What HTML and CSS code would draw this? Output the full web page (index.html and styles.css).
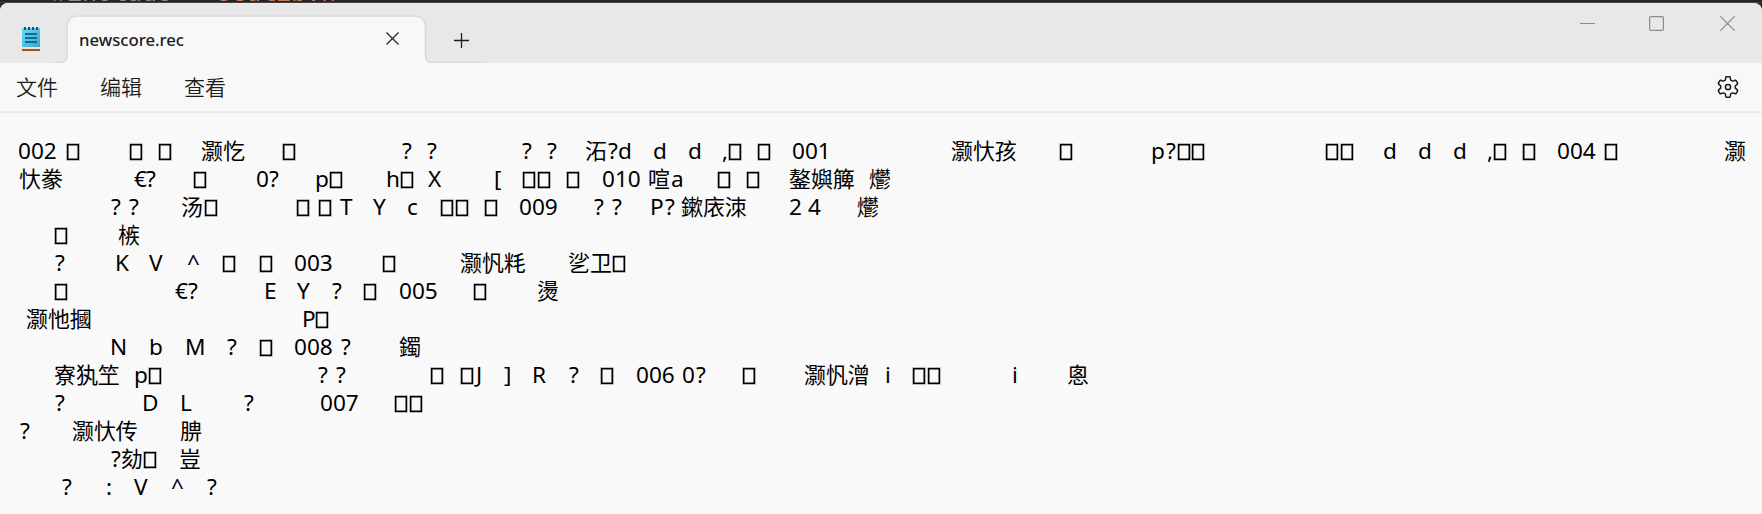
FILE: index.html
```html
<!DOCTYPE html>
<html lang="zh-CN">
<head>
<meta charset="utf-8">
<title>newscore.rec</title>
<link rel="stylesheet" href="styles.css">
</head>
<body>
<div class="backdrop"><span class="inc">#include</span><span class="hdr">&lt;stdlib.h&gt;</span></div>
<div class="window">
  <header class="titlebar">
    <svg class="app-icon" width="18" height="24" viewBox="0 0 18 24">
      <defs><linearGradient id="pad" x1="0" y1="0" x2="1" y2="1"><stop offset="0" stop-color="#6fd9f5"/><stop offset="1" stop-color="#3aa7cf"/></linearGradient></defs>
      <rect y="1" width="18" height="19" fill="url(#pad)"/>
      <path d="M0 20h18v2H0z" fill="#e4e4e4"/>
      <path d="M0 22h18v2H0z" fill="#a9500f"/>
      <path d="M3 0v3M7 0v3M11 0v3M15 0v3" stroke="#14566f" stroke-width="2"/>
      <path d="M3 7h12M3 11h12M3 15h12" stroke="#0b6c90" stroke-width="2"/>
    </svg>
    <svg class="tab-shape" width="431" height="49" viewBox="0 0 431 49">
      <path d="M0 47.500H5Q12 47.500 12 41V13Q12 1 24 1H358Q370.500 1 370.500 13V41Q370.500 47.500 376 47.500H431V49H0z" fill="#f8f8f8"/>
      <path d="M0 47.500H5Q12 47.500 12 41V13Q12 1 24 1H358Q370.500 1 370.500 13V41Q370.500 47.500 376 47.500H431" fill="none" stroke="#dadada" stroke-width="1.500"/>
    </svg>
    <div class="tab"><span class="tab-title">newscore.rec</span>
      <svg class="tab-close" width="13" height="13" viewBox="0 0 13 13"><path d="M.5.5l12 12M12.500.5l-12 12" stroke="#222" stroke-width="1.200"/></svg>
    </div>
    <svg class="tab-new" width="15" height="15" viewBox="0 0 15 15"><path d="M7.500 0v15M0 7.500h15" stroke="#1c1c1c" stroke-width="1.300"/></svg>
    <div class="controls">
      <svg width="15" height="15" viewBox="0 0 15 15"><path d="M0 7.500h15" stroke="#8c8c8c"/></svg>
      <svg width="15" height="15" viewBox="0 0 15 15"><rect x=".6" y=".6" width="13.800" height="13.800" rx="1.200" fill="none" stroke="#8c8c8c" stroke-width="1.200"/></svg>
      <svg class="win-close" width="15" height="15" viewBox="0 0 15 15"><path d="M.3.3l14.400 14.400M14.700.3L.3 14.700" stroke="#8c8c8c" stroke-width="1.200"/></svg>
    </div>
  </header>
  <nav class="menu">
    <span>文件</span><span>编辑</span><span>查看</span>
    <svg class="gear" width="22" height="22" viewBox="0 0 22 22" fill="none" stroke="#1c1c1c" stroke-width="1.500" stroke-linejoin="round">
      <path d="M9.400.8H12.600Q13.100.8 13.200 1.400L13.700 4.100L15.500 5.100L18.100 4.200Q18.700 4 19 4.500L20.600 7.200Q20.900 7.700 20.400 8.100L18.300 9.900V12.100L20.400 13.900Q20.900 14.300 20.600 14.800L19 17.500Q18.700 18 18.100 17.800L15.500 16.900L13.700 17.900L13.200 20.600Q13.100 21.200 12.600 21.200H9.400Q8.900 21.200 8.800 20.600L8.300 17.900L6.500 16.900L3.900 17.800Q3.300 18 3 17.500L1.400 14.800Q1.100 14.300 1.600 13.900L3.700 12.100V9.900L1.600 8.100Q1.100 7.700 1.400 7.200L3 4.500Q3.300 4 3.900 4.200L6.500 5.100L8.300 4.100L8.800 1.400Q8.900.8 9.400.8z"/>
      <circle cx="11" cy="11" r="2.600"/>
    </svg>
  </nav>
  <main class="editor" id="editor"></main>
</div>
<script src="editor.js"></script>
</body>
</html>
```
FILE: styles.css
```css
* { box-sizing: border-box; }
body { margin: 0; width: 1762px; height: 514px; overflow: hidden; background: #242424; color: #000; font-family: "Noto Sans", "Noto Sans CJK SC", sans-serif; display: flex; flex-direction: column; }
.backdrop { height: 3px; display: flex; align-items: flex-end; gap: 29px; padding-left: 52px; overflow: hidden; background: #242424; border-bottom: 1px solid #444; font: 25px/24px "Liberation Mono", monospace; }
.inc { color: #8c8c8c; transform: translateY(5px); }
.hdr { color: #c27a5c; transform: translateY(5px); }
.window { flex: 1; display: flex; flex-direction: column; background: #f9f9f9; border-radius: 8px 8px 0 0; overflow: hidden; }
.titlebar { height: 60px; flex: none; display: flex; background: #e8e8e8; }
.app-icon { margin: 24px 0 0 22px; }
.tab-shape { margin: 12px -431px 0 15px; flex: none; }
.tab { width: 358px; margin-left: 12px; padding: 29px 26px 0 12px; display: flex; justify-content: space-between; align-items: flex-start; z-index: 1; }
.tab-title { font: 500 16.700px/16px "Noto Sans", sans-serif; color: #1c1c1c; }
.tab-new { margin: 30px 0 0 29px; z-index: 1; }
.controls { margin: 13px 27px 0 auto; display: flex; gap: 54px; }
.win-close { margin-left: 2px; }
.menu { height: 50px; flex: none; display: flex; gap: 42px; padding: 7px 23px 0 16px; border-bottom: 2px solid #e9e9e9; background: #f8f8f8; color: #1c1c1c; font: 350 21px/33px "Noto Sans CJK SC", sans-serif; }
.gear { margin: 6px 0 0 auto; }
.editor { padding-top: 24px; }
.line { display: flex; height: 28px; line-height: 28px; font-size: 22.600px; white-space: pre; }
.token { flex: none; display: flex; }
.cjk { font-family: "Noto Sans CJK SC", sans-serif; font-size: 21.900px; line-height: 26px; }
.box { width: 12px; height: 16px; margin: 7px 0 0; border: 1px solid #000; box-shadow: inset 0 0 0 .5px #000, 0 0 0 .5px rgba(0, 0, 0, .5); }
```
FILE: editor.js
```js
// Each line lists its column stops followed by the run that starts there; "#" is an unprintable byte.
const lines = [
  "18 002|67 #|130 #|159 #|201 灏忔|283 #|402 ?|427 ?|522 ?|547 ?|585 沰|608 ?|618 d|653 d|688 d|722 ,|729 #|758 #|792 001|951 灏忕孩|1060 #|1151 p|1166 ?|1178 #|1192 #|1326 #|1341 #|1383 d|1418 d|1453 d|1487 ,|1494 #|1523 #|1557 004|1605 #|1724 灏",
  "19 忕豢|134 €|146 ?|194 #|256 0|269 ?|315 p|330 #|386 h|401 #|428 X|494 [|523 #|538 #|567 #|602 010|648 喧|671 a|718 #|747 #|789 鏊嬩簲|869 爩",
  "111 ?|129 ?|181 汤|205 #|297 #|319 #|340 T|373 Y|407 c|441 #|456 #|485 #|519 009|594 ?|612 ?|650 P|665 ?|681 鏉庡洓|789 2|808 4|857 爩",
  "55 #|118 槉",
  "55 ?|115 K|149 V|187 ^|223 #|260 #|294 003|383 #|460 灏忛粍|568 乷卫|613 #",
  "55 #|175 €|188 ?|264 E|297 Y|332 ?|364 #|399 005|474 #|537 燙",
  "26 灏忚摑|302 P|316 #",
  "110 N|149 b|185 M|227 ?|260 #|294 008|341 ?|399 鐲",
  "54 寮犱笁|134 p|149 #|318 ?|336 ?|431 #|461 #|476 J|504 ]|532 R|569 ?|601 #|636 006|682 0|696 ?|743 #|804 灏忛潧|885 i|913 #|928 #|1012 i|1067 悤",
  "55 ?|142 D|180 L|244 ?|320 007|395 #|410 #",
  "20 ?|72 灏忕传|180 腗",
  "111 ?|121 劾|144 #|179 豈",
  "62 ?|106 :|134 V|171 ^|207 ?"
];

const editor = document.getElementById("editor");
for (const source of lines) {
  const runs = source.split("|").map(s => {
    const i = s.indexOf(" ");
    return [Number(s.slice(0, i)), s.slice(i + 1)];
  });
  const line = document.createElement("div");
  line.className = "line";
  line.style.paddingLeft = runs[0][0] + "px";
  runs.forEach(([x, text], i) => {
    const token = document.createElement("span");
    if (i + 1 < runs.length) token.style.width = runs[i + 1][0] - x + "px";
    if (text === "#") {
      const box = document.createElement("i");
      box.className = "box";
      token.className = "token";
      token.append(box);
    } else {
      token.className = /[\u4e00-\u9fff]/.test(text) ? "token cjk" : "token";
      token.textContent = text;
    }
    line.append(token);
  });
  editor.append(line);
}
```
